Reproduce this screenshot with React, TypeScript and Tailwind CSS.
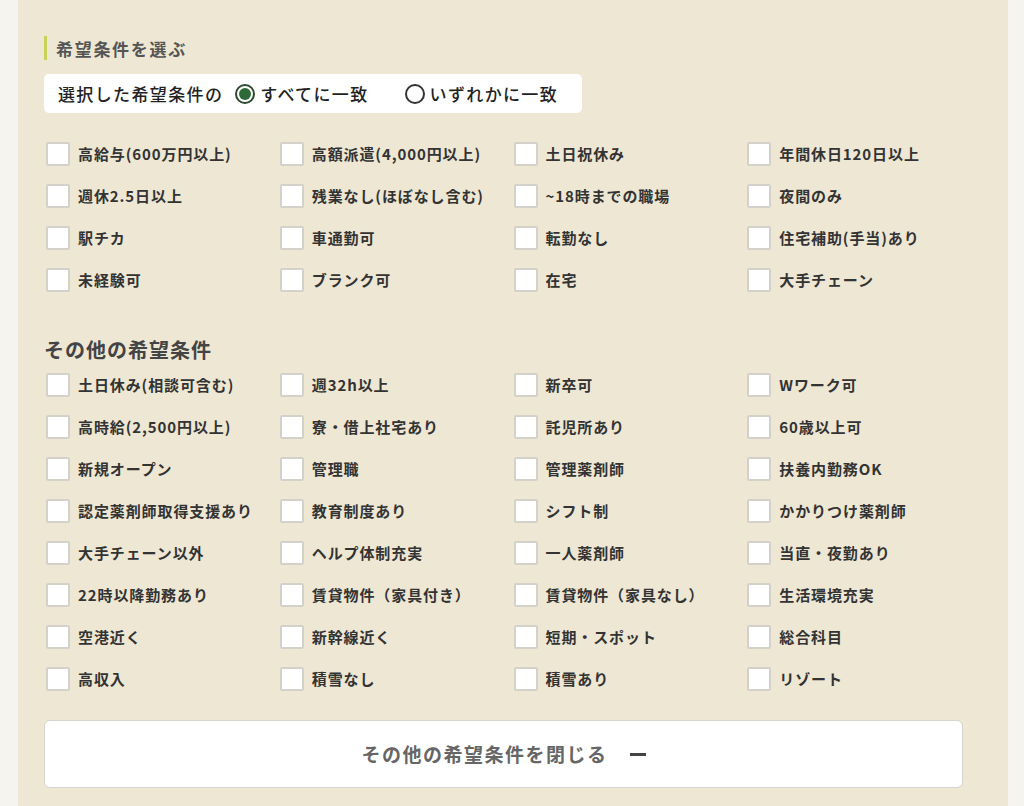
import React from "react";

const main = [
  "高給与(600万円以上)", "高額派遣(4,000円以上)", "土日祝休み", "年間休日120日以上",
  "週休2.5日以上", "残業なし(ほぼなし含む)", "~18時までの職場", "夜間のみ",
  "駅チカ", "車通勤可", "転勤なし", "住宅補助(手当)あり",
  "未経験可", "ブランク可", "在宅", "大手チェーン",
];

const other = [
  "土日休み(相談可含む)", "週32h以上", "新卒可", "Wワーク可",
  "高時給(2,500円以上)", "寮・借上社宅あり", "託児所あり", "60歳以上可",
  "新規オープン", "管理職", "管理薬剤師", "扶養内勤務OK",
  "認定薬剤師取得支援あり", "教育制度あり", "シフト制", "かかりつけ薬剤師",
  "大手チェーン以外", "ヘルプ体制充実", "一人薬剤師", "当直・夜勤あり",
  "22時以降勤務あり", "賃貸物件（家具付き）", "賃貸物件（家具なし）", "生活環境充実",
  "空港近く", "新幹線近く", "短期・スポット", "総合科目",
  "高収入", "積雪なし", "積雪あり", "リゾート",
];

function Grid({ items }: { items: string[] }) {
  return (
    <div className="grid w-[937px] grid-cols-4 pl-[2px]">
      {items.map((t) => (
        <label key={t} className="flex h-[42px] items-center">
          <span className="h-[24px] w-[24px] shrink-0 rounded-[2px] border-2 border-[#d4d1ca] bg-white" />
          <span className="ml-[8px] text-[15px] font-semibold tracking-[0.06em] text-[#333]">{t}</span>
        </label>
      ))}
    </div>
  );
}

export default function App() {
  return (
    <div
      className="flex min-h-[806px] w-full bg-[#f6f4ef]"
      style={{ fontFamily: '"Noto Sans CJK JP", "Noto Sans", sans-serif' }}
    >
      <div className="ml-[18px] w-[990px] bg-[#ede7d4] pl-[26px] pt-[36px]">
        <div className="flex h-[24px] items-center border-l-[3px] border-[#c9d257] pl-[9px]">
          <span className="text-[17px] font-bold leading-none tracking-[0.1em] text-[#555]">希望条件を選ぶ</span>
        </div>
        <div className="mt-[14px] flex h-[39px] w-[538px] items-center rounded-[5px] bg-white pl-[14px] text-[17px] font-medium tracking-[0.08em] text-[#222]">
          <span>選択した希望条件の</span>
          <span className="ml-[12px] flex h-[20px] w-[20px] items-center justify-center rounded-full border-2 border-[#2b4a30]">
            <span className="h-[12px] w-[12px] rounded-full bg-[#2e6a38]" />
          </span>
          <span className="ml-[5px]">すべてに一致</span>
          <span className="ml-[36px] h-[20px] w-[20px] rounded-full border-2 border-[#333]" />
          <span className="ml-[5px]">いずれかに一致</span>
        </div>
        <div className="mt-[20px]">
          <Grid items={main} />
        </div>
        <div className="mt-[35px] h-[28px] text-[20px] font-bold leading-[28px] tracking-[0.05em] text-[#444]">
          その他の希望条件
        </div>
        <Grid items={other} />
        <button className="mt-[20px] flex h-[68px] w-[919px] items-center justify-center rounded-[6px] border border-[#d6d4ce] bg-white">
          <span className="text-[19px] font-bold tracking-[0.08em] text-[#666]">その他の希望条件を閉じる</span>
          <span className="ml-[22px] h-[3px] w-[16px] bg-[#444]" />
        </button>
      </div>
    </div>
  );
}
